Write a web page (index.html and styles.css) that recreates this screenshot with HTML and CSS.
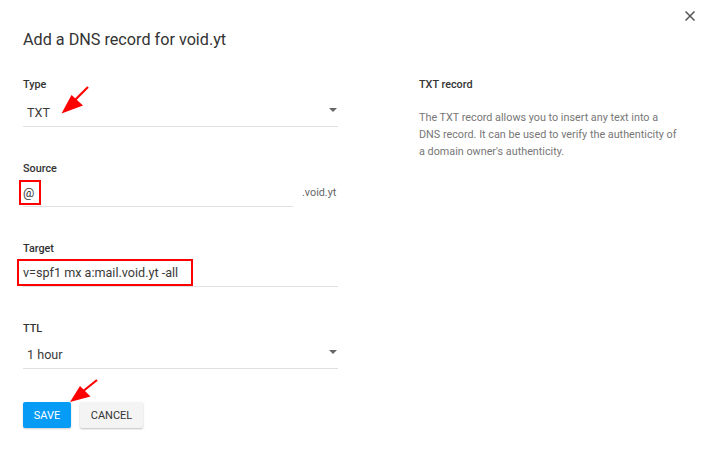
FILE: index.html
```html
<!DOCTYPE html>
<html lang="en">
<head>
<meta charset="utf-8">
<title>Add a DNS record</title>
<link rel="stylesheet" href="styles.css">
</head>
<body>
<div class="dialog">
  <button class="close" aria-label="Close">
    <svg width="10" height="10" viewBox="0 0 10 10"><path d="M0.5 0.5L9.5 9.5M9.5 0.5L0.5 9.5" stroke="#555" stroke-width="1.5" fill="none"/></svg>
  </button>
  <h1 class="title">Add a DNS record for void.yt</h1>
  <div class="content">
    <form class="form">
      <div class="field field-first">
        <div class="label">Type</div>
        <div class="row select-row">
          <span class="value select-value">TXT</span>
          <span class="caret"></span>
        </div>
      </div>
      <div class="field">
        <div class="label">Source</div>
        <div class="suffix-wrap">
          <div class="row input-row source-input">
            <span class="value">@</span>
            <span class="mark mark-source"></span>
          </div>
          <span class="suffix">.void.yt</span>
        </div>
      </div>
      <div class="field">
        <div class="label">Target</div>
        <div class="row input-row">
          <span class="value">v=spf1 mx a:mail.void.yt -all</span>
          <span class="mark mark-target"></span>
        </div>
      </div>
      <div class="field">
        <div class="label">TTL</div>
        <div class="row select-row">
          <span class="value select-value">1 hour</span>
          <span class="caret"></span>
        </div>
      </div>
      <div class="actions">
        <button type="button" class="btn btn-primary">SAVE</button>
        <button type="button" class="btn btn-default">CANCEL</button>
      </div>
    </form>
    <aside class="help">
      <div class="help-title">TXT record</div>
      <p class="help-text">The TXT record allows you to insert any text into a DNS record. It can be used to verify the authenticity of a domain owner's authenticity.</p>
    </aside>
  </div>
  <svg class="arrows" width="708" height="453" viewBox="0 0 708 453">
    <line x1="88" y1="87" x2="72" y2="103" stroke="#f00" stroke-width="2.2"/>
    <polygon points="61.5,113.5 71.5,95 83,105.5" fill="#f00"/>
    <line x1="97" y1="380" x2="82" y2="392" stroke="#f00" stroke-width="2.2"/>
    <polygon points="70,402 80,386 90.5,396.5" fill="#f00"/>
  </svg>
</div>
</body>
</html>
```

FILE: styles.css
```css
* { box-sizing: border-box; }
html, body { margin: 0; padding: 0; background: #fff; }
body {
  font-family: Roboto, "Noto Sans", "Liberation Sans", sans-serif;
  color: #333;
}
.dialog {
  position: relative;
  width: 708px;
  height: 453px;
  padding: 29px 0 0 23px;
}
.close {
  position: absolute;
  top: 10px;
  right: 12px;
  width: 12px;
  height: 12px;
  padding: 1px;
  border: 0;
  background: none;
  display: flex;
}
.title {
  margin: 0;
  font-size: 16.2px;
  line-height: 21px;
  font-weight: 400;
  color: #333;
}
.content {
  display: flex;
  gap: 81px;
  margin-top: 28px;
}
.form {
  width: 315px;
  display: flex;
  flex-direction: column;
  gap: 33px;
}
.label {
  font-size: 10.8px;
  line-height: 14px;
  font-weight: 500;
  color: #333;
  margin-top: 2px;
}
.field-first .label { margin-top: 0; }
.row {
  position: relative;
  display: flex;
  align-items: center;
  font-size: 12.6px;
  line-height: 16px;
  padding-bottom: 5px;
  border-bottom: 1px solid #e0e0e0;
  color: #3a3a3a;
}
.select-row {
  padding-top: 11px;
  justify-content: space-between;
  padding-right: 1px;
}
.field-first .select-row { padding-top: 13px; }
.select-value { padding-left: 4px; }
.input-row { padding-top: 9px; }
.caret {
  width: 0;
  height: 0;
  border-left: 4px solid transparent;
  border-right: 4px solid transparent;
  border-top: 4px solid #666;
  margin-bottom: 6px;
}
.suffix-wrap {
  display: flex;
  align-items: flex-end;
  gap: 9px;
}
.source-input { width: 270px; }
.suffix {
  font-size: 10.8px;
  line-height: 14px;
  color: #666;
  padding-bottom: 7px;
}
.mark {
  position: absolute;
  border: 2px solid #f00;
}
.mark-source { left: -4px; top: 4px; width: 22px; height: 25px; }
.mark-target { left: -6px; top: 3px; width: 176px; height: 27px; }
.actions {
  display: flex;
  gap: 9px;
}
.btn {
  height: 26px;
  border: 0;
  border-radius: 2px;
  font-family: inherit;
  font-size: 11px;
  font-weight: 400;
  padding: 0 8px;
  cursor: pointer;
}
.btn-primary {
  width: 48px;
  background: #069cf6;
  color: #fff;
  box-shadow: 0 1px 2px rgba(0,0,0,.2);
}
.btn-default {
  width: 63px;
  background: #f4f4f4;
  color: #333;
  box-shadow: 0 1px 2px rgba(0,0,0,.25);
}
.help { width: 258px; }
.help-title {
  font-size: 10.8px;
  line-height: 14px;
  font-weight: 500;
  color: #333;
}
.help-text {
  margin: 17px 0 0;
  font-size: 10.8px;
  line-height: 17px;
  color: #777;
}
.arrows {
  position: absolute;
  left: 0;
  top: 0;
  pointer-events: none;
}
```
